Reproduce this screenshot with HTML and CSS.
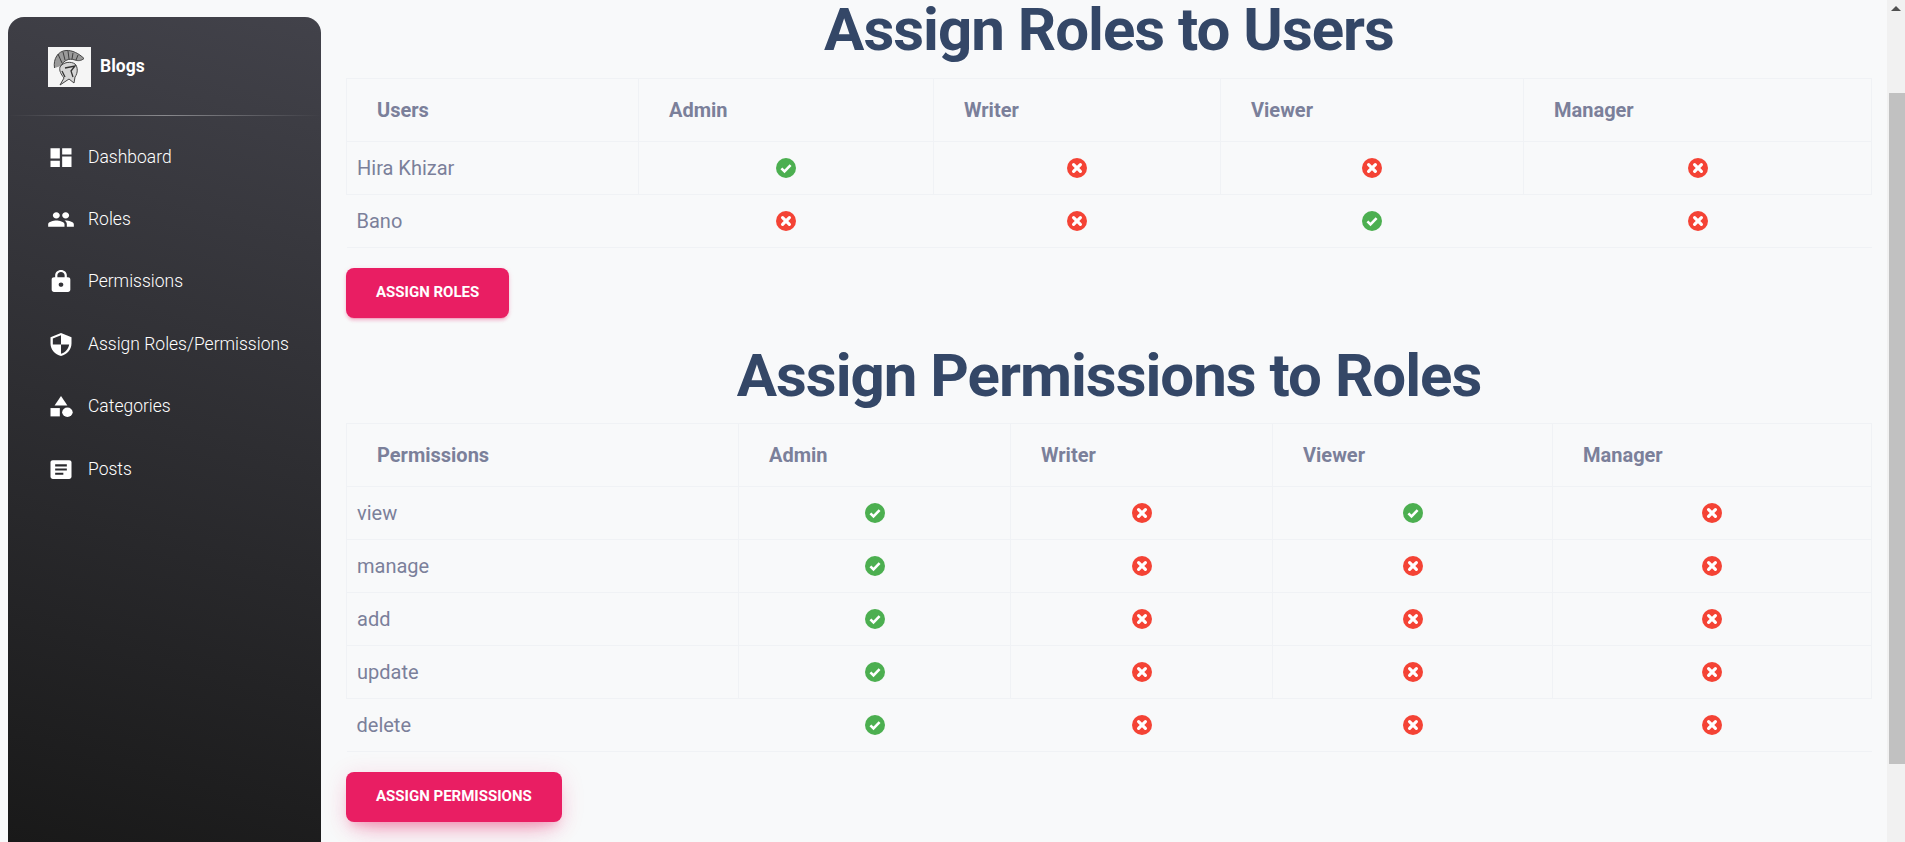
FILE: index.html
```html
<!DOCTYPE html>
<html lang="en">
  <head>
    <meta charset="UTF-8" />
    <meta name="viewport" content="width=device-width, initial-scale=1.0" />
    <title>Assign Roles</title>
    <link rel="stylesheet" href="styles.css">
  </head>
  <body>
    <svg class="defs" width="0" height="0">
      <symbol id="yes" viewBox="0 0 20 20">
        <circle cx="10" cy="10" r="10" fill="#4caf50" />
        <path d="M5.4 10.4l3.1 3 6.1-6.2" fill="none" stroke="#fff" stroke-width="2.6" />
      </symbol>
      <symbol id="no" viewBox="0 0 20 20">
        <circle cx="10" cy="10" r="10" fill="#f44335" />
        <path d="M6.6 6.6l6.8 6.8M13.4 6.6l-6.8 6.8" fill="none" stroke="#fff" stroke-width="3.2" stroke-linecap="round" />
      </symbol>
    </svg>

    <div id="sidebar">
      <div class="brand">
        <svg class="logo" viewBox="0 0 43 40">
          <rect width="43" height="40" fill="#f5f5f5" />
          <path d="M6.5 21C5 12 10 4 18 3.500c6-.5 13 3 18 8-3 2.500-6 2.500-9 1.500-6-2-11 0-14 6" fill="#9a9a9a" stroke="#444" stroke-width="1" />
          <path d="M10 7l4 9M15 5l2 8M20 4l1 8M25 6l-1 6M30 8l-2 5" fill="none" stroke="#333" stroke-width="0.9" />
          <path d="M12 20c3-5 11-6 15-3 3 3 3 9 0 13l-1 6-5-4-9 6 4-7c-3-4-5-7-4-11z" fill="#d6d6d6" stroke="#444" stroke-width="1" />
          <path d="M17 21l10-2-4 5 2 6M14 24l3 6" fill="none" stroke="#333" stroke-width="1.3" />
        </svg>
        <span class="brand-name">Blogs</span>
      </div>
      <hr class="side-line" />
      <ul class="nav">
        <li>
          <svg viewBox="0 0 24 24" preserveAspectRatio="none"><path d="M3 13h8V3H3v10zm0 8h8v-6H3v6zm10 0h8V11h-8v10zm0-18v6h8V3h-8z" /></svg>
          <a href="#">Dashboard</a>
        </li>
        <li>
          <svg viewBox="0 0 24 24" preserveAspectRatio="none"><path d="M16 11c1.66 0 2.99-1.34 2.99-3S17.66 5 16 5c-1.66 0-3 1.34-3 3s1.34 3 3 3zm-8 0c1.66 0 2.99-1.34 2.99-3S9.66 5 8 5C6.34 5 5 6.34 5 8s1.34 3 3 3zm0 2c-2.33 0-7 1.17-7 3.5V19h14v-2.5c0-2.33-4.67-3.5-7-3.5zm8 0c-.29 0-.62.02-.97.05 1.16.84 1.97 1.97 1.97 3.45V19h6v-2.5c0-2.33-4.67-3.5-7-3.5z" /></svg>
          <a href="#">Roles</a>
        </li>
        <li>
          <svg viewBox="0 0 24 24" preserveAspectRatio="none"><path d="M18 8h-1V6c0-2.76-2.24-5-5-5S7 3.24 7 6v2H6c-1.1 0-2 .9-2 2v10c0 1.1.9 2 2 2h12c1.1 0 2-.9 2-2V10c0-1.1-.9-2-2-2zm-6 9c-1.1 0-2-.9-2-2s.9-2 2-2 2 .9 2 2-.9 2-2 2zm3.1-9H8.9V6c0-1.71 1.39-3.1 3.1-3.1 1.71 0 3.1 1.39 3.1 3.1v2z" /></svg>
          <a href="#">Permissions</a>
        </li>
        <li>
          <svg viewBox="0 0 24 24" preserveAspectRatio="none"><path d="M12 1L3 5v6c0 5.55 3.84 10.74 9 12 5.16-1.26 9-6.45 9-12V5l-9-4zm0 10.99h7c-.53 4.12-3.28 7.79-7 8.94V12H5V6.3l7-3.11v8.8z" /></svg>
          <a href="#">Assign Roles/Permissions</a>
        </li>
        <li>
          <svg viewBox="0 0 24 24" preserveAspectRatio="none"><path d="M12 2l-5.500 9h11z" /><circle cx="17.500" cy="17.500" r="4.500" /><path d="M3 13.500h8v8H3z" /></svg>
          <a href="#">Categories</a>
        </li>
        <li>
          <svg viewBox="0 0 24 24" preserveAspectRatio="none"><path d="M19 3H5c-1.1 0-2 .9-2 2v14c0 1.1.9 2 2 2h14c1.1 0 2-.9 2-2V5c0-1.1-.9-2-2-2zm-5 14H7v-2h7v2zm3-4H7v-2h10v2zm0-4H7V7h10v2z" /></svg>
          <a href="#">Posts</a>
        </li>
      </ul>
    </div>

    <div id="main">
      <h1>Assign Roles to Users</h1>
      <table class="users">
        <colgroup><col class="c1" /><col class="c2" /><col class="c3" /><col class="c4" /><col class="c5" /></colgroup>
        <thead>
          <tr><th>Users</th><th>Admin</th><th>Writer</th><th>Viewer</th><th>Manager</th></tr>
        </thead>
        <tbody>
          <tr>
            <td>Hira Khizar</td>
            <td><svg class="mark"><use href="#yes" /></svg></td>
            <td><svg class="mark"><use href="#no" /></svg></td>
            <td><svg class="mark"><use href="#no" /></svg></td>
            <td><svg class="mark"><use href="#no" /></svg></td>
          </tr>
          <tr>
            <td>Bano</td>
            <td><svg class="mark"><use href="#no" /></svg></td>
            <td><svg class="mark"><use href="#no" /></svg></td>
            <td><svg class="mark"><use href="#yes" /></svg></td>
            <td><svg class="mark"><use href="#no" /></svg></td>
          </tr>
        </tbody>
      </table>
      <button class="btn">Assign Roles</button>

      <h1 class="second">Assign Permissions to Roles</h1>
      <table class="perms">
        <colgroup><col class="c1" /><col class="c2" /><col class="c3" /><col class="c4" /><col class="c5" /></colgroup>
        <thead>
          <tr><th>Permissions</th><th>Admin</th><th>Writer</th><th>Viewer</th><th>Manager</th></tr>
        </thead>
        <tbody>
          <tr>
            <td>view</td>
            <td><svg class="mark"><use href="#yes" /></svg></td>
            <td><svg class="mark"><use href="#no" /></svg></td>
            <td><svg class="mark"><use href="#yes" /></svg></td>
            <td><svg class="mark"><use href="#no" /></svg></td>
          </tr>
          <tr>
            <td>manage</td>
            <td><svg class="mark"><use href="#yes" /></svg></td>
            <td><svg class="mark"><use href="#no" /></svg></td>
            <td><svg class="mark"><use href="#no" /></svg></td>
            <td><svg class="mark"><use href="#no" /></svg></td>
          </tr>
          <tr>
            <td>add</td>
            <td><svg class="mark"><use href="#yes" /></svg></td>
            <td><svg class="mark"><use href="#no" /></svg></td>
            <td><svg class="mark"><use href="#no" /></svg></td>
            <td><svg class="mark"><use href="#no" /></svg></td>
          </tr>
          <tr>
            <td>update</td>
            <td><svg class="mark"><use href="#yes" /></svg></td>
            <td><svg class="mark"><use href="#no" /></svg></td>
            <td><svg class="mark"><use href="#no" /></svg></td>
            <td><svg class="mark"><use href="#no" /></svg></td>
          </tr>
          <tr>
            <td>delete</td>
            <td><svg class="mark"><use href="#yes" /></svg></td>
            <td><svg class="mark"><use href="#no" /></svg></td>
            <td><svg class="mark"><use href="#no" /></svg></td>
            <td><svg class="mark"><use href="#no" /></svg></td>
          </tr>
        </tbody>
      </table>
      <button class="btn raised">Assign Permissions</button>
    </div>

    <div id="scrollbar">
      <div class="arrow"></div>
      <div class="thumb"></div>
    </div>
  </body>
</html>
```

FILE: styles.css
```css
html,
body {
  height: 100%;
}
body {
  margin: 0;
  display: flex;
  overflow: hidden;
  background-color: #f8f9fa;
  font-family: Roboto, "Liberation Sans", sans-serif;
}
.defs {
  position: absolute;
}
#sidebar {
  flex: none;
  width: 313px;
  height: 825px;
  margin: 17px 0 0 8px;
  border-radius: 16px 16px 0 0;
  background-image: linear-gradient(195deg, #42424a, #191919);
  color: white;
}
.brand {
  display: flex;
  align-items: center;
  gap: 9px;
  height: 40px;
  padding: 30px 0 0 40px;
}
.logo {
  width: 43px;
  height: 40px;
}
.brand-name {
  font-size: 17.5px;
  font-weight: 700;
  margin-top: -3px;
}
.side-line {
  height: 1px;
  margin: 28px 0 0;
  border: 0;
  background-image: linear-gradient(90deg, rgba(255, 255, 255, 0), rgba(255, 255, 255, 0.4), rgba(255, 255, 255, 0));
}
.nav {
  list-style: none;
  margin: 0;
  padding: 10px 0 0 39px;
}
.nav li {
  display: flex;
  align-items: center;
  gap: 13px;
  height: 62.4px;
}
.nav svg {
  width: 28px;
  height: 25px;
  fill: white;
}
.nav a {
  color: white;
  text-decoration: none;
  font-size: 17.5px;
  font-weight: 300;
  margin-top: -1px;
}
#main {
  flex: 1;
  min-width: 0;
  padding: 0 15px 0 25px;
}
h1 {
  margin: 0 0 18px;
  text-align: center;
  color: #344767;
  font-size: 60px;
  font-weight: 700;
  line-height: 60px;
  letter-spacing: -1px;
}
h1.second {
  margin: 28px 0 17px;
}
table {
  width: 100%;
  table-layout: fixed;
  border-collapse: collapse;
  color: #7b809a;
}
.users .c1 { width: 292px; }
.users .c2 { width: 295px; }
.users .c3 { width: 287px; }
.users .c4 { width: 303px; }
.perms .c1 { width: 392px; }
.perms .c2 { width: 272px; }
.perms .c3 { width: 262px; }
.perms .c4 { width: 280px; }
th,
td {
  border: 1px solid #f0f2f5;
}
th {
  height: 62px;
  padding: 0 0 0 30px;
  text-align: left;
  font-size: 20px;
  font-weight: 700;
}
td {
  height: 52px;
  padding: 0;
  font-size: 20px;
  font-weight: 400;
  text-align: center;
}
td:first-child {
  padding-left: 10px;
  text-align: left;
}
tbody tr:last-child td {
  border-width: 0 0 1px;
}
.mark {
  display: block;
  width: 20px;
  height: 20px;
  margin: 0 auto;
}
.btn {
  display: block;
  height: 50px;
  margin-top: 20px;
  padding: 0 30px 2px;
  border: 0;
  border-radius: 8px;
  background-color: #e91e63;
  color: white;
  font-family: inherit;
  font-size: 15px;
  font-weight: 700;
  text-transform: uppercase;
  box-shadow: 0 3px 3px 0 rgba(233, 30, 99, 0.15), 0 3px 1px -2px rgba(233, 30, 99, 0.2), 0 1px 5px 0 rgba(233, 30, 99, 0.15);
}
.raised {
  box-shadow: 0 14px 26px -12px rgba(233, 30, 99, 0.4), 0 4px 23px 0 rgba(233, 30, 99, 0.15), 0 8px 10px -5px rgba(233, 30, 99, 0.2);
}
#scrollbar {
  flex: none;
  width: 18px;
  background-color: #f1f1f1;
}
.arrow {
  width: 0;
  height: 0;
  margin: 6px auto 0;
  border-left: 5px solid transparent;
  border-right: 5px solid transparent;
  border-bottom: 5px solid #505050;
}
.thumb {
  height: 671px;
  margin: 82px 0 0 2px;
  background-color: #c1c1c1;
}
```
